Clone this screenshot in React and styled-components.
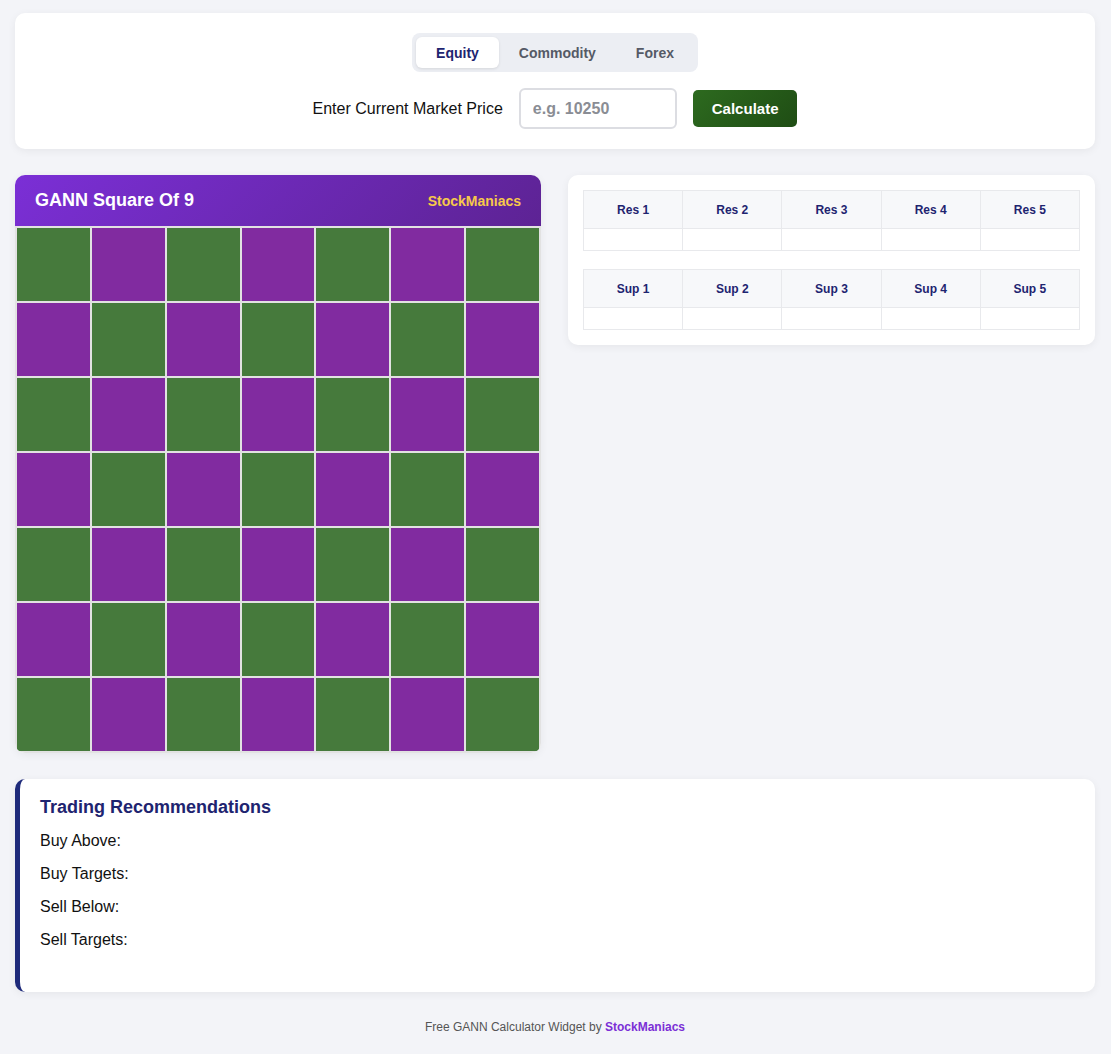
import React, { useState } from 'react';
import styled, { createGlobalStyle } from 'styled-components';

const GlobalStyle = createGlobalStyle`
  body {
    margin: 0;
    background: #f3f4f8;
    font-family: 'Liberation Sans', Arial, sans-serif;
  }
`;

const Page = styled.div`
  padding: 13px 16px 18px 15px;
  display: flex;
  flex-direction: column;
  gap: 26px;
`;

const Card = styled.div`
  background: #fff;
  border-radius: 10px;
  box-shadow: 0 2px 8px rgba(0, 0, 0, 0.06);
`;

const TopCard = styled(Card)`
  height: 136px;
  box-sizing: border-box;
  padding-top: 20px;
  display: flex;
  flex-direction: column;
  align-items: center;
  gap: 16px;
`;

const Tabs = styled.div`
  display: flex;
  background: #eceef3;
  border-radius: 8px;
  padding: 4px;
  gap: 0;
`;

const Tab = styled.button`
  border: none;
  border-radius: 6px;
  padding: 0 20px;
  height: 31px;
  font: bold 14px 'Liberation Sans', Arial, sans-serif;
  cursor: pointer;
  background: ${(p) => (p.active ? '#fff' : 'transparent')};
  color: ${(p) => (p.active ? '#1e2470' : '#555a66')};
  box-shadow: ${(p) => (p.active ? '0 1px 3px rgba(0,0,0,0.1)' : 'none')};
`;

const InputRow = styled.div`
  display: flex;
  align-items: center;
  gap: 16px;
`;

const Label = styled.label`
  font-size: 16px;
  color: #111;
`;

const PriceInput = styled.input`
  width: 158px;
  height: 41px;
  box-sizing: border-box;
  border: 2px solid #dcdde2;
  border-radius: 6px;
  padding: 0 12px;
  font: bold 16px 'Liberation Sans', Arial, sans-serif;
  margin-right: 0;
  &::placeholder { color: #8a8d94; }
`;

const CalcButton = styled.button`
  height: 37px;
  padding: 0 19px;
  border: none;
  border-radius: 5px;
  background: linear-gradient(135deg, #2d6a1f, #1f4d14);
  color: #fff;
  font: bold 15px 'Liberation Sans', Arial, sans-serif;
`;

const Middle = styled.div`
  display: grid;
  grid-template-columns: 526px 1fr;
  gap: 27px;
  align-items: start;
`;

const SquareCard = styled(Card)`
  overflow: hidden;
`;

const SquareHeader = styled.div`
  height: 51px;
  display: flex;
  align-items: center;
  justify-content: space-between;
  padding: 0 20px;
  background: linear-gradient(135deg, #7b2fd6, #5d2394);
`;

const SquareTitle = styled.div`
  color: #fff;
  font-weight: bold;
  font-size: 18px;
`;

const Brand = styled.div`
  color: #f7c94b;
  font-weight: bold;
  font-size: 14px;
`;

const Grid = styled.div`
  display: grid;
  grid-template-columns: repeat(7, 1fr);
  gap: 2px;
  padding: 2px;
  background: #e2e2e2;
`;

const Cell = styled.div`
  height: 73px;
  background: ${(p) => (p.green ? '#467a3c' : '#812ba0')};
`;

const LevelsCard = styled(Card)`
  padding: 15px;
  display: flex;
  flex-direction: column;
  gap: 18px;
`;

const Table = styled.table`
  width: 100%;
  border-collapse: collapse;
  table-layout: fixed;
`;

const Th = styled.th`
  height: 35px;
  background: #f7f8fa;
  border: 1px solid #e8e9ec;
  color: #1e2470;
  font-size: 12px;
  font-weight: bold;
`;

const Td = styled.td`
  height: 19px;
  border: 1px solid #e8e9ec;
`;

const RecCard = styled(Card)`
  border-left: 5px solid #1e2a7a;
  padding: 18px 20px 28px 20px;
`;

const RecTitle = styled.h3`
  margin: 0 0 14px;
  color: #1e2470;
  font-size: 18px;
`;

const RecLine = styled.div`
  font-size: 16px;
  color: #111;
  line-height: 18px;
  margin-bottom: 15px;
`;

const Footer = styled.div`
  text-align: center;
  font-size: 12px;
  color: #555;
  margin-top: 2px;
  b { color: #7b2fd6; }
`;

const LevelTable = ({ prefix }) => (
  <Table>
    <thead>
      <tr>{[1, 2, 3, 4, 5].map((n) => <Th key={n}>{prefix} {n}</Th>)}</tr>
    </thead>
    <tbody>
      <tr>{[1, 2, 3, 4, 5].map((n) => <Td key={n} />)}</tr>
    </tbody>
  </Table>
);

export default function App() {
  const [tab, setTab] = useState('Equity');
  const cells = [];
  for (let i = 0; i < 49; i++) cells.push(<Cell key={i} green={i % 2 === 0} />);

  return (
    <>
      <GlobalStyle />
      <Page>
        <TopCard>
          <Tabs>
            {['Equity', 'Commodity', 'Forex'].map((t) => (
              <Tab key={t} active={t === tab} onClick={() => setTab(t)}>{t}</Tab>
            ))}
          </Tabs>
          <InputRow>
            <Label>Enter Current Market Price</Label>
            <PriceInput placeholder="e.g. 10250" />
            <CalcButton>Calculate</CalcButton>
          </InputRow>
        </TopCard>
        <Middle>
          <SquareCard>
            <SquareHeader>
              <SquareTitle>GANN Square Of 9</SquareTitle>
              <Brand>StockManiacs</Brand>
            </SquareHeader>
            <Grid>{cells}</Grid>
          </SquareCard>
          <LevelsCard>
            <LevelTable prefix="Res" />
            <LevelTable prefix="Sup" />
          </LevelsCard>
        </Middle>
        <RecCard>
          <RecTitle>Trading Recommendations</RecTitle>
          <RecLine>Buy Above:</RecLine>
          <RecLine>Buy Targets:</RecLine>
          <RecLine>Sell Below:</RecLine>
          <RecLine>Sell Targets:</RecLine>
        </RecCard>
        <Footer>Free GANN Calculator Widget by <b>StockManiacs</b></Footer>
      </Page>
    </>
  );
}
